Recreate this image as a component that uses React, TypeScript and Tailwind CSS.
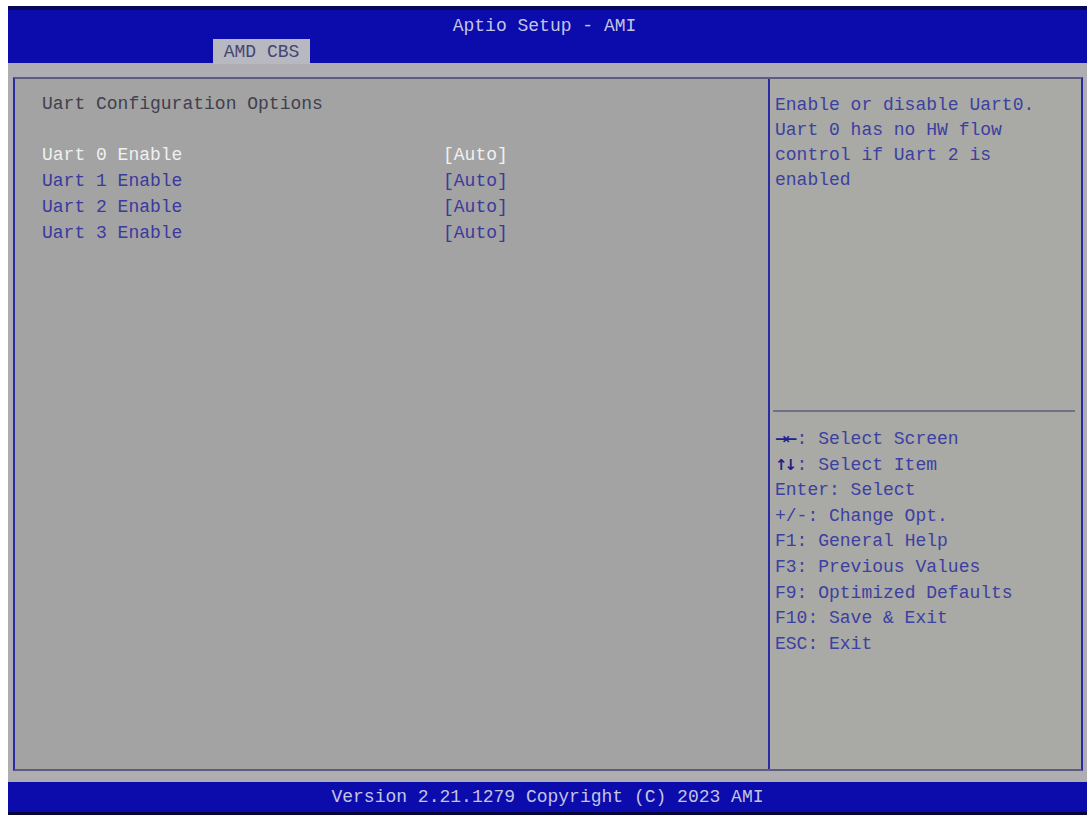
import React from "react";

const items = [
  { label: "Uart 0 Enable", value: "[Auto]", selected: true },
  { label: "Uart 1 Enable", value: "[Auto]", selected: false },
  { label: "Uart 2 Enable", value: "[Auto]", selected: false },
  { label: "Uart 3 Enable", value: "[Auto]", selected: false },
];

const helpLines = [
  "Enable or disable Uart0.",
  "Uart 0 has no HW flow",
  "control if Uart 2 is",
  "enabled",
];

const keys = [
  { key: "\u2192\u2190", text: ": Select Screen", arrow: true },
  { key: "\u2191\u2193", text: ": Select Item", arrow: true },
  { key: "Enter", text: ": Select" },
  { key: "+/-", text: ": Change Opt." },
  { key: "F1", text: ": General Help" },
  { key: "F3", text: ": Previous Values" },
  { key: "F9", text: ": Optimized Defaults" },
  { key: "F10", text: ": Save & Exit" },
  { key: "ESC", text: ": Exit" },
];

const App: React.FC = () => {
  return (
    <div
      className="w-[1087px] h-[818px] bg-white pt-[6px] pl-[8px] overflow-hidden text-[18px]"
      style={{ fontFamily: '"Liberation Mono", "DejaVu Sans Mono", monospace' }}
    >
      {/* top bar */}
      <div className="h-[57px] bg-[#0c0cac] border-t-[4px] border-[#06065a] flex flex-col justify-between">
        <div className="text-center text-[#c4c4e4] leading-[26px] pr-[6px] mt-[3px]">
          Aptio Setup - AMI
        </div>
        <div className="pl-[205px]">
          <div className="w-[97px] h-[25px] bg-[#b8b8c0] text-[#454575] flex items-center justify-center leading-none">
            AMD CBS
          </div>
        </div>
      </div>

      {/* body */}
      <div className="h-[719px] bg-[#adadb2] pt-[14px] pl-[5px] pr-[4px] pb-[11px]">
        <div className="h-full flex border-t-2 border-t-[#5c5c80] border-b-2 border-b-[#5c5c80] border-x-2 border-x-[#2a2aa6]">
          {/* left panel */}
          <div className="w-[753px] bg-[#a3a3a3] pl-[27px] pt-[13px] leading-[25.7px]">
            <div className="text-[#40404e]">Uart Configuration Options</div>
            <div className="h-[25.7px]" />
            {items.map((it) => (
              <div
                key={it.label}
                className={`flex ${it.selected ? "text-[#f0f0f0]" : "text-[#3a3a9e]"}`}
              >
                <span className="w-[401px]">{it.label}</span>
                <span>{it.value}</span>
              </div>
            ))}
          </div>

          {/* divider */}
          <div className="w-[2px] bg-[#2a2aa6]" />

          {/* right panel */}
          <div className="flex-1 bg-[#a9a9a6] flex flex-col">
            <div className="h-[331px] pl-[5px] pt-[14px] leading-[25px] text-[#3c40a0]">
              {helpLines.map((l) => (
                <div key={l}>{l}</div>
              ))}
            </div>
            <div className="h-[2px] bg-[#70708a] ml-[3px] mr-[6px]" />
            <div className="pl-[5px] pt-[15px] leading-[25.6px] text-[#3c40a0]">
              {keys.map((k) => (
                <div key={k.key}>
                  {k.arrow ? (
                    <span
                      className="inline-block w-[21.6px] text-[15px] font-bold text-[#20208a] tracking-[-3px] align-top"
                      style={{ fontFamily: '"DejaVu Sans", sans-serif' }}
                    >
                      {k.key}
                    </span>
                  ) : (
                    <span>{k.key}</span>
                  )}
                  {k.text}
                </div>
              ))}
            </div>
          </div>
        </div>
      </div>

      {/* footer */}
      <div className="h-[33px] bg-[#0c0cac] border-b-[3px] border-[#05053a] flex items-center justify-center text-[#c4c4e4]">
        Version 2.21.1279 Copyright (C) 2023 AMI
      </div>
    </div>
  );
};

export default App;
